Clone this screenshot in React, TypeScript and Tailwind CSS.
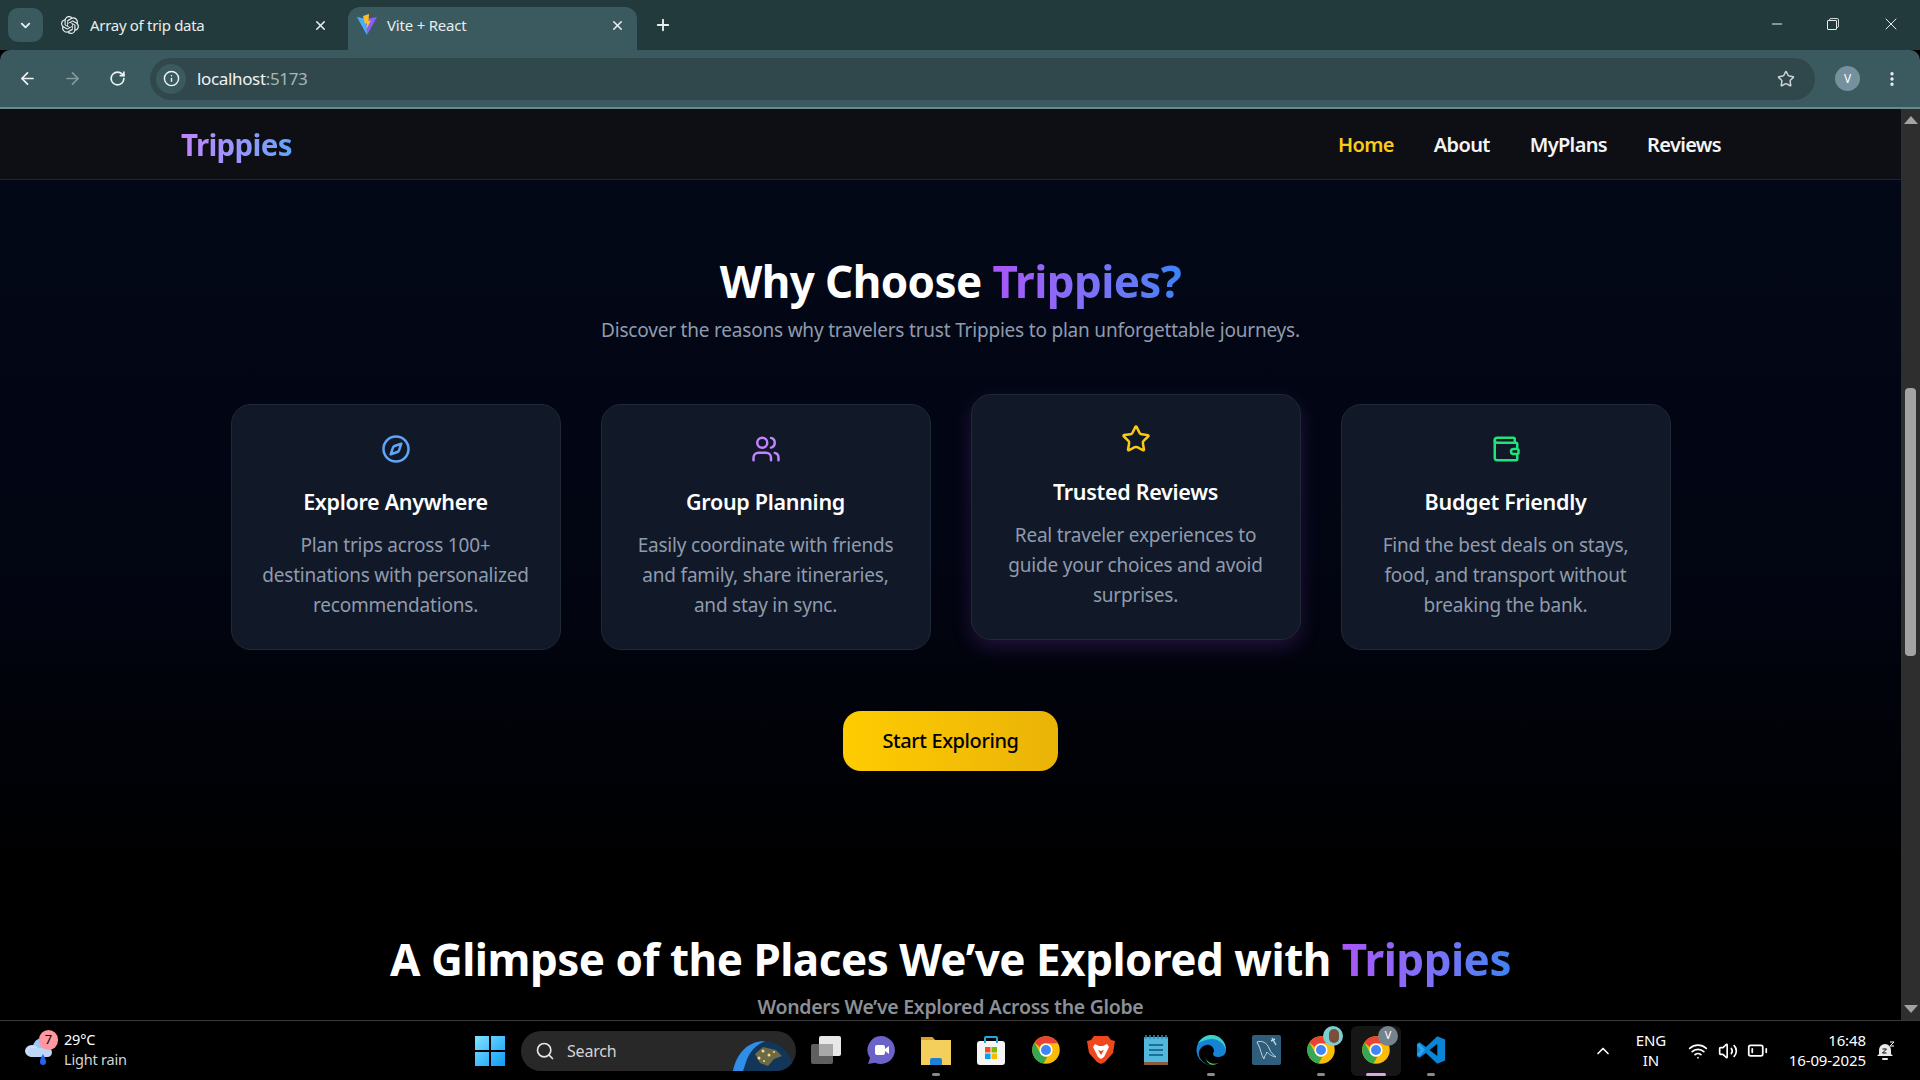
import React from "react";
import { Compass, Users, Star, Wallet, ArrowLeft, ArrowRight, RotateCw, Info, ChevronDown, X, Plus, Minus, EllipsisVertical, Search, ChevronUp, Wifi, Volume2, BatteryLow } from "lucide-react";
import { SiOpenai } from "react-icons/si";

const SANS = "font-['Noto_Sans','Open_Sans',sans-serif]";

function ViteLogo() {
  return (
    <svg width="20" height="22" viewBox="0 0 20 22">
      <path d="M0 3 L10 21 L20 3 L14 4 L10 5 L5 4 Z" fill="#8b5cf6" />
      <path d="M0 3 L10 21 L9 5 Z" fill="#38bdf8" opacity="0.85" />
      <path d="M12 0 L6 2 L8 10 L10 9 L9.500 15 L14 6.500 L11.500 7 Z" fill="#fbbf24" />
    </svg>
  );
}

function ChromeIcon({ size = 30 }: { size?: number }) {
  return (
    <svg width={size} height={size} viewBox="0 0 48 48">
      <circle cx="24" cy="24" r="22" fill="#fbbc05" />
      <path d="M24 2a22 22 0 0 1 19 11H24a11 11 0 0 0-10 6L5.500 12A22 22 0 0 1 24 2z" fill="#ea4335" />
      <path d="M5.500 12l9.500 17a11 11 0 0 0 11 6l-6 10.500A22 22 0 0 1 5.500 12z" fill="#34a853" />
      <circle cx="24" cy="24" r="10.500" fill="#fff" />
      <circle cx="24" cy="24" r="8" fill="#4285f4" />
    </svg>
  );
}

function WeatherIcon() {
  return (
    <svg width="32" height="30" viewBox="0 0 32 30">
      <ellipse cx="18" cy="11" rx="9" ry="9" fill="#9ec5f5" />
      <ellipse cx="8" cy="15" rx="7" ry="6" fill="#c8defa" />
      <rect x="4" y="12" width="24" height="9" rx="4.500" fill="#bcd6f8" />
      <path d="M19 18 c2 4 3 6 3 8 a3 3 0 0 1-6 0c0-2 1-5 3-8z" fill="#2563eb" />
    </svg>
  );
}

function TaskIcon({ children, active, dot }: { children: React.ReactNode; active?: boolean; dot?: boolean }) {
  return (
    <div className={`relative flex h-[50px] w-[50px] shrink-0 items-center justify-center rounded-md ${active ? "bg-[#161616]" : ""}`}>
      <div className="-mt-[2px] flex items-center justify-center">{children}</div>
      {dot && <div className="absolute bottom-0 h-[3px] w-[8px] rounded-full bg-[#8a8a8a]" />}
      {active && <div className="absolute bottom-0 h-[3px] w-[20px] rounded-full bg-[#dca6e0]" />}
    </div>
  );
}

function Card({ icon, title, desc, hover }: { icon: React.ReactNode; title: string; desc: string[]; hover?: boolean }) {
  return (
    <div className={`flex h-[246px] flex-col items-center rounded-[20px] border border-[#1f2937] bg-[#111827] px-4 pt-[29px] text-center ${hover ? "-translate-y-[10px] shadow-[0_8px_20px_rgba(168,85,247,0.18)]" : ""}`}>
      <div className="h-[30px]">{icon}</div>
      <h3 className="mt-[22px] text-[21.500px] leading-[32px] font-semibold tracking-[-0.3px] text-white">{title}</h3>
      <p className="mt-[12px] text-[19px] leading-[30px] tracking-[-0.2px] text-[#8f9bad]">
        {desc.map((d) => (
          <span key={d} className="block whitespace-nowrap">{d}</span>
        ))}
      </p>
    </div>
  );
}

const Grad = ({ children }: { children: React.ReactNode }) => (
  <span className="bg-gradient-to-r from-[#a855f7] to-[#3b82f6] bg-clip-text text-transparent">{children}</span>
);

export default function App() {
  return (
    <div className={`flex h-[1080px] w-[1920px] flex-col overflow-hidden bg-black ${SANS}`}>
      {/* Tab strip */}
      <div className="flex h-[50px] shrink-0 items-end bg-[#223a3c] pl-2 text-[#e8eeee]">
        <div className="mb-2 flex h-[34px] w-[35px] items-center justify-center rounded-[10px] bg-[#3a5a5f]">
          <ChevronDown size={15} strokeWidth={3} />
        </div>
        <div className="flex h-[43px] w-[305px] items-center pb-[7px] pl-[18px] pr-[20px]">
          <SiOpenai size={18} />
          <span className="ml-[11px] flex-1 text-[15px] tracking-[-0.3px]">Array of trip data</span>
          <X size={15} strokeWidth={2.500} />
        </div>
        <div className="flex h-[43px] w-[289px] items-center rounded-t-[12px] bg-[#3a5a5f] pb-[7px] pl-[9px] pr-[12px]">
          <ViteLogo />
          <span className="ml-[10px] flex-1 text-[15px] tracking-[-0.2px]">Vite + React</span>
          <X size={15} strokeWidth={2.500} />
        </div>
        <div className="flex h-[43px] items-center pb-[7px] pl-[17px]">
          <Plus size={18} strokeWidth={2.500} />
        </div>
        <div className="flex-1" />
        <div className="flex h-[50px] items-center gap-[42px] pb-[3px] pr-[19px]">
          <Minus size={16} strokeWidth={1.500} />
          <div className="relative h-[12px] w-[12px]">
            <div className="absolute right-0 top-0 h-[10px] w-[10px] rounded-[2px] border border-[#cfd8d8]" />
            <div className="absolute bottom-0 left-0 h-[10px] w-[10px] rounded-[1px] border border-[#e8eeee] bg-[#223a3c]" />
          </div>
          <X size={20} strokeWidth={1.200} />
        </div>
      </div>

      {/* Toolbar */}
      <div className="flex h-[57px] shrink-0 items-center rounded-t-[10px] bg-[#3a5a5f] text-[#eef3f3]">
        <div className="flex w-[150px] items-center pl-[18px]">
          <ArrowLeft size={19} strokeWidth={2.200} />
          <ArrowRight size={19} strokeWidth={2.200} className="ml-[26px] text-[#839a9c]" />
          <RotateCw size={17} strokeWidth={2.400} className="ml-[27px]" />
        </div>
        <div className="flex h-[42px] w-[1665px] items-center rounded-full bg-[#30484c] pl-[6px] pr-[20px]">
          <div className="flex h-[30px] w-[30px] items-center justify-center rounded-full bg-[#3a5a5f]">
            <Info size={17} />
          </div>
          <span className="ml-[11px] flex-1 text-[17px] tracking-[-0.35px]">
            localhost<span className="text-[#a7b6b8]">:5173</span>
          </span>
          <Star size={18} strokeWidth={2} className="text-[#cdd5d6]" />
        </div>
        <div className="ml-[20px] flex h-[25px] w-[25px] items-center justify-center rounded-full bg-[#76919e] text-[12px] text-white">V</div>
        <EllipsisVertical size={18} strokeWidth={2.500} className="ml-[23px]" />
      </div>
      <div className="h-[2px] shrink-0 bg-[#6a8a8a]" />

      {/* Viewport */}
      <div className="flex min-h-0 flex-1">
        <div className="relative flex min-w-0 flex-1 flex-col overflow-hidden bg-[linear-gradient(180deg,#030818_0%,#020512_50%,#000_85%)]">
          <nav className="flex h-[71px] shrink-0 items-center justify-between border-b border-[#20242e] bg-[#0d0f14] pl-[181px] pr-[180px] pt-[1px]">
            <span className="mt-[2px] bg-gradient-to-r from-[#c084fc] to-[#60a5fa] bg-clip-text text-[29.500px] font-bold tracking-[-0.65px] text-transparent">Trippies</span>
            <div className="flex gap-[40px] text-[20px] font-semibold tracking-[-0.65px] text-[#f4f4f5]">
              <span className="text-[#facc15]">Home</span>
              <span>About</span>
              <span>MyPlans</span>
              <span>Reviews</span>
            </div>
          </nav>
          <section className="flex flex-col items-center pt-[71px]">
            <h2 className="text-[44px] leading-[60px] font-bold tracking-[-0.6px] text-white">
              Why Choose <Grad>Trippies?</Grad>
            </h2>
            <p className="mt-[5px] text-[19px] leading-[28px] tracking-[-0.2px] text-[#8f9bad]">
              Discover the reasons why travelers trust Trippies to plan unforgettable journeys.
            </p>
            <div className="mt-[60px] grid w-[1440px] grid-cols-4 gap-[40px]">
              <Card icon={<Compass size={30} className="text-[#60a5fa]" strokeWidth={2} />} title="Explore Anywhere" desc={["Plan trips across 100+", "destinations with personalized", "recommendations."]} />
              <Card icon={<Users size={30} className="text-[#c084fc]" strokeWidth={2} />} title="Group Planning" desc={["Easily coordinate with friends", "and family, share itineraries,", "and stay in sync."]} />
              <Card hover icon={<Star size={30} className="text-[#facc15]" strokeWidth={2} />} title="Trusted Reviews" desc={["Real traveler experiences to", "guide your choices and avoid", "surprises."]} />
              <Card icon={<Wallet size={30} className="text-[#22e27a]" strokeWidth={2} />} title="Budget Friendly" desc={["Find the best deals on stays,", "food, and transport without", "breaking the bank."]} />
            </div>
            <button className="mt-[61px] h-[60px] w-[215px] rounded-[18px] bg-gradient-to-r from-[#ffcc00] to-[#eab308] text-[20px] font-medium tracking-[-0.4px] text-black">
              Start Exploring
            </button>
            <h2 className="mt-[158px] text-[44px] leading-[60px] font-bold tracking-[-0.5px] whitespace-nowrap text-white">
              A Glimpse of the Places We’ve Explored with <Grad>Trippies</Grad>
            </h2>
            <p className="mt-[4px] text-[19.500px] leading-[28px] font-semibold tracking-[-0.3px] text-[#8b8f97]">Wonders We’ve Explored Across the Globe</p>
          </section>
        </div>
        {/* Scrollbar */}
        <div className="flex w-[19px] shrink-0 flex-col items-center bg-[#2e2e2e]">
          <div className="mt-[7px] h-0 w-0 border-x-[7px] border-b-[8px] border-x-transparent border-b-[#a3a3a3]" />
          <div className="mt-[264px] h-[268px] w-[11px] rounded-[4px] bg-[#a3a3a3]" />
          <div className="flex-1" />
          <div className="mb-[7px] h-0 w-0 border-x-[7px] border-t-[8px] border-x-transparent border-t-[#a3a3a3]" />
        </div>
      </div>

      {/* Taskbar */}
      <div className="flex h-[60px] shrink-0 items-center border-t border-[#3a3a3a] bg-black text-white">
        <div className="relative ml-[24px] flex w-[451px] items-center">
          <WeatherIcon />
          <div className="absolute left-[15px] -top-[2px] flex h-[20px] w-[19px] items-center justify-center rounded-full bg-[#ff98a0] text-[13px] text-black">7</div>
          <div className="ml-[8px] -mt-[3px] text-[14.500px] leading-[20px] tracking-[-0.2px]">
            <div>29°C</div>
            <div className="text-[#d4d4d4]">Light rain</div>
          </div>
        </div>
        <svg width="30" height="30" viewBox="0 0 30 30" className="shrink-0">
          <defs>
            <linearGradient id="win" x1="0" y1="0" x2="1" y2="1">
              <stop offset="0" stopColor="#7fe3ff" />
              <stop offset="1" stopColor="#0f9bf5" />
            </linearGradient>
          </defs>
          <path d="M0 0h14v14H0zM16 0h14v14H16zM0 16h14v14H0zM16 16h14v14H16z" fill="url(#win)" />
        </svg>
        <div className="relative ml-[16px] flex h-[40px] w-[275px] shrink-0 items-center overflow-hidden rounded-full bg-[#282828] pl-[14px]">
          <Search size={20} strokeWidth={2} className="text-[#e5e5e5]" />
          <span className="ml-[12px] text-[16px] tracking-[-0.2px] text-[#d4d4d4]">Search</span>
          <svg width="62" height="32" viewBox="0 0 62 32" className="absolute bottom-0 right-[1px]">
            <path d="M0 32C4 13 16 2 32 2c15 0 26 12 30 30z" fill="#12365a" />
            <path d="M0 32C4 13 16 2 32 2c-10 4-16 12-19 21l-3 9z" fill="#2f8fe8" />
            <path d="M22 15l8-7 13 3 6 6-8 3-6 7-8-3z" fill="#6a6a48" />
            <circle cx="30" cy="12" r="1.500" fill="#ffd978" />
            <circle cx="26" cy="19" r="1.500" fill="#ffd978" />
            <circle cx="36" cy="16" r="1.500" fill="#ffd978" />
            <circle cx="41" cy="13" r="1" fill="#ffd978" />
            <circle cx="31" cy="22" r="1" fill="#ffd978" />
          </svg>
        </div>
        <div className="ml-[5px] flex shrink-0 gap-[5px]">
          <TaskIcon>
            <div className="relative h-[28px] w-[30px]">
              <div className="absolute bottom-0 left-0 h-[20px] w-[22px] rounded-[2px] bg-[#5f5f5f]" />
              <div className="absolute right-0 top-0 h-[20px] w-[22px] rounded-[2px] bg-[#e8e8e8]" />
              <div className="absolute bottom-[8px] left-[8px] h-[12px] w-[14px] bg-[#a8a8a8]" />
            </div>
          </TaskIcon>
          <TaskIcon>
            <svg width="30" height="30" viewBox="0 0 30 30">
              <path d="M15 1a14 14 0 1 1-6 26.700L2 29l2-6A14 14 0 0 1 15 1z" fill="#6b63c7" />
              <rect x="9" y="10" width="10" height="10" rx="2" fill="#fff" />
              <path d="M19 14l4-3v8l-4-3z" fill="#fff" />
            </svg>
          </TaskIcon>
          <TaskIcon dot>
            <svg width="30" height="30" viewBox="0 0 30 30">
              <path d="M0 2h11l3 3h16v25H0z" fill="#f5cf5c" />
              <path d="M0 2h11l3 3H0z" fill="#d9a021" />
              <path d="M9 30v-5a2 2 0 0 1 2-2h8a2 2 0 0 1 2 2v5z" fill="#1f7fd6" />
            </svg>
          </TaskIcon>
          <TaskIcon>
            <svg width="30" height="30" viewBox="0 0 30 30">
              <rect x="1" y="6" width="28" height="24" rx="3" fill="#f5f5f5" />
              <path d="M9 8V3a1 1 0 0 1 1-1h10a1 1 0 0 1 1 1v5" fill="none" stroke="#22a7e0" strokeWidth="2" />
              <rect x="9" y="12" width="5.500" height="5.500" fill="#f25022" />
              <rect x="15.500" y="12" width="5.500" height="5.500" fill="#7fba00" />
              <rect x="9" y="18.500" width="5.500" height="5.500" fill="#00a4ef" />
              <rect x="15.500" y="18.500" width="5.500" height="5.500" fill="#ffb900" />
            </svg>
          </TaskIcon>
          <TaskIcon><ChromeIcon /></TaskIcon>
          <TaskIcon>
            <svg width="28" height="30" viewBox="0 0 28 30">
              <path d="M7 1h14l3 4 4 1-2 12-8 9-4 2-4-2-8-9L0 6l4-1z" fill="#f1471d" />
              <path d="M8 9l4 2h4l4-2 2 3-3 6-2 4-3 2-3-2-2-4-3-6z" fill="#fff" />
              <path d="M11 15l3 1 3-1-3 5z" fill="#f1471d" />
            </svg>
          </TaskIcon>
          <TaskIcon>
            <svg width="24" height="30" viewBox="0 0 24 30">
              <rect y="2" width="24" height="28" rx="1" fill="#52b7dc" />
              <rect y="27" width="24" height="3" fill="#8a5a3a" />
              <path d="M2 0v4M6 0v4M10 0v4M14 0v4M18 0v4M22 0v4" stroke="#2b8cb8" strokeWidth="1.500" />
              <path d="M5 10h14M5 15h14M5 20h14" stroke="#1c6f96" strokeWidth="2" />
            </svg>
          </TaskIcon>
          <TaskIcon dot>
            <svg width="30" height="30" viewBox="0 0 30 30">
              <path d="M15 0a15 15 0 0 1 15 15c0 5-4 7-8 7-3 0-5-1-5-3 0-1 1-2 1-3 0-4-4-7-8-6S2 15 3 20c1 6 7 10 13 10A15 15 0 0 1 15 0z" fill="#1783d4" />
              <path d="M2 8C6 2 12 0 15 0c8 0 15 6 15 15-2-7-8-11-14-11-6 0-11 3-14 4z" fill="#3ed0c5" />
              <path d="M9 23c3 5 8 7 14 5l-4 1.500C14 31 11 27 9 23z" fill="#6fd45b" />
            </svg>
          </TaskIcon>
          <TaskIcon>
            <svg width="29" height="30" viewBox="0 0 29 30">
              <rect width="29" height="30" rx="2" fill="#2f5d7c" />
              <path d="M5 7c5-2 10 1 12 6 1 3 3 6 7 9-5-1-7-3-9-5-1 3-3 4-3 7-3-4-3-10-7-17z" fill="none" stroke="#c7d3da" strokeWidth="1" />
              <path d="M20 3l4 7M19 6l4-2" stroke="#c7d3da" strokeWidth="1.500" />
            </svg>
          </TaskIcon>
          <TaskIcon dot>
            <div className="relative">
              <ChromeIcon />
              <div className="absolute -right-[7px] -top-[9px] h-[20px] w-[20px] rounded-full bg-[#7ccfd0]">
                <div className="absolute left-[6px] top-[3px] h-[14px] w-[10px] rounded-full bg-[#7a4f3a]" />
              </div>
            </div>
          </TaskIcon>
          <TaskIcon active>
            <div className="relative">
              <ChromeIcon />
              <div className="absolute -right-[7px] -top-[9px] flex h-[20px] w-[20px] items-center justify-center rounded-full bg-[#76838c] text-[11px] text-white">V</div>
            </div>
          </TaskIcon>
          <TaskIcon dot>
            <svg width="30" height="30" viewBox="0 0 100 100">
              <path d="M71 4L33 40 12 24 3 29v42l9 5 21-16 38 36 26-11V15z" fill="#0a84d6" />
              <path d="M71 30L45 50l26 20z" fill="#000" />
              <path d="M3 34l9-5 18 21-18 21-9-5 12-16z" fill="#2ba3ef" />
            </svg>
          </TaskIcon>
        </div>
        <div className="flex-1" />
        <ChevronUp size={20} strokeWidth={2} className="mr-[19px] shrink-0" />
        <div className="-mt-[2px] w-[38px] shrink-0 text-center text-[15px] leading-[20px] tracking-[-0.1px]">
          <div>ENG</div>
          <div>IN</div>
        </div>
        <Wifi size={20} className="ml-[18px] shrink-0" />
        <Volume2 size={20} className="ml-[10px] shrink-0" />
        <BatteryLow size={21} className="ml-[9px] shrink-0" />
        <div className="-mt-[2px] ml-[12px] w-[86px] shrink-0 text-right text-[15px] leading-[20px] tracking-[-0.1px]">
          <div>16:48</div>
          <div>16-09-2025</div>
        </div>
        <svg width="20" height="20" viewBox="0 0 20 20" className="ml-[10px] mr-[24px] shrink-0" fill="#eaeaea">
          <path d="M9 3a6 6 0 0 1 6 6v4l2 2H1l2-2V9a6 6 0 0 1 6-6z" />
          <rect x="6" y="17" width="6" height="2" rx="1" />
          <path d="M6.500 8h4l-4 4h4" fill="none" stroke="#000" strokeWidth="1" />
          <path d="M14 1h4l-4 4h4" fill="none" stroke="#fff" strokeWidth="1" />
        </svg>
      </div>
    </div>
  );
}
